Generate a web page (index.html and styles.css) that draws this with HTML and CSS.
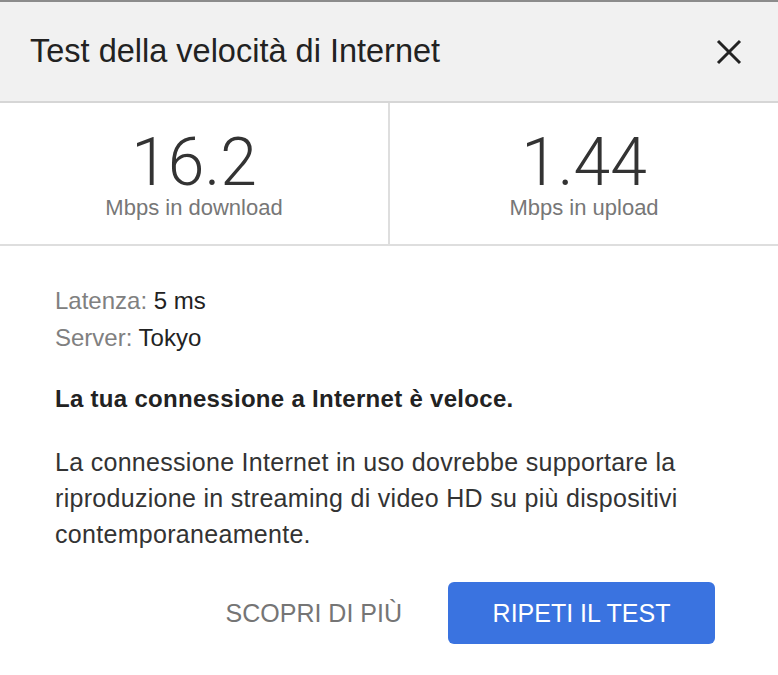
FILE: index.html
```html
<!DOCTYPE html>
<html lang="it">
<head>
    <meta charset="UTF-8">
    <meta name="viewport" content="width=device-width, initial-scale=1.0">
    <title>Test della velocità di Internet</title>
    <link rel="stylesheet" href="styles.css">
</head>
<body>
    <div class="dialog">
        <div class="header">
            <h1>Test della velocità di Internet</h1>
            <button class="close" aria-label="Chiudi">
                <svg width="26" height="26" viewBox="0 0 26 26">
                    <path d="M2 2 L24 24 M24 2 L2 24" stroke="#222" stroke-width="3" fill="none"/>
                </svg>
            </button>
        </div>

        <div class="stats">
            <div class="stat">
                <div class="value">16.2</div>
                <div class="unit">Mbps in download</div>
            </div>
            <div class="stat">
                <div class="value">1.44</div>
                <div class="unit">Mbps in upload</div>
            </div>
        </div>

        <div class="content">
            <div class="meta"><span class="label">Latenza:</span> 5 ms</div>
            <div class="meta"><span class="label">Server:</span> Tokyo</div>

            <p class="verdict">La tua connessione a Internet è veloce.</p>

            <p class="desc">La connessione Internet in uso dovrebbe supportare la riproduzione in streaming di video HD su più dispositivi contemporaneamente.</p>

            <div class="actions">
                <button class="link-btn">SCOPRI DI PIÙ</button>
                <button class="primary-btn">RIPETI IL TEST</button>
            </div>
        </div>
    </div>
</body>
</html>
```

FILE: styles.css
```css
body {
    margin: 0;
    font-family: 'Liberation Sans', Arial, sans-serif;
    background: #fff;
}

.dialog {
    width: 778px;
    border-top: 2px solid #8c8c8c;
}

.header {
    display: flex;
    align-items: center;
    justify-content: space-between;
    height: 99px;
    padding: 0 36px 0 30px;
    background-color: #f1f1f1;
    border-bottom: 2px solid #d6d6d6;
}

h1 {
    margin: 0;
    font-size: 32.5px;
    font-weight: normal;
    color: #222;
}

.close {
    border: none;
    background: none;
    padding: 0;
    width: 26px;
    height: 26px;
    cursor: pointer;
}

.stats {
    display: grid;
    grid-template-columns: 390px 1fr;
    border-bottom: 2px solid #dedede;
}

.stat {
    height: 141px;
    display: flex;
    flex-direction: column;
    align-items: center;
    justify-content: center;
}

.stat:first-child {
    border-right: 2px solid #dedede;
}

.value {
    font-family: Roboto, 'Liberation Sans', sans-serif;
    font-weight: 300;
    font-size: 66px;
    line-height: 66px;
    color: #333;
    padding-top: 2px;
}

.unit {
    font-size: 22px;
    color: #777;
    line-height: 24px;
}

.content {
    padding: 36px 63px 0 55px;
}

.meta {
    font-size: 24px;
    line-height: 37px;
    color: #222;
}

.meta .label {
    color: #808080;
}

.verdict {
    margin: 25px 0 0;
    font-size: 24px;
    letter-spacing: 0.3px;
    line-height: 36px;
    font-weight: bold;
    color: #222;
}

.desc {
    margin: 27px 0 0;
    font-size: 25px;
    letter-spacing: 0.3px;
    line-height: 36px;
    color: #333;
}

.actions {
    display: flex;
    justify-content: flex-end;
    align-items: center;
    gap: 46px;
    margin-top: 30px;
}

.link-btn {
    border: none;
    background: none;
    font-family: inherit;
    font-size: 25px;
    color: #757575;
    padding: 0;
    cursor: pointer;
}

.primary-btn {
    border: none;
    background-color: #3a73e0;
    color: #fff;
    font-family: inherit;
    font-size: 25px;
    width: 267px;
    height: 62px;
    border-radius: 6px;
    cursor: pointer;
}
```
